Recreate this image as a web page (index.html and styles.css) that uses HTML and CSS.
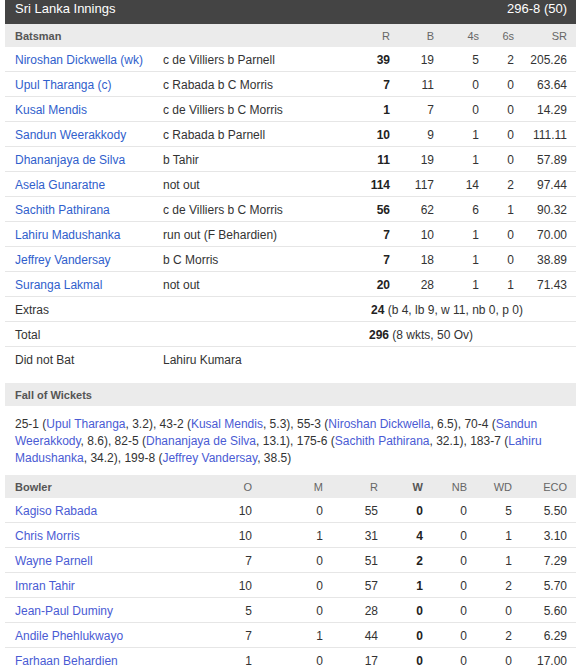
FILE: index.html
```html
<!DOCTYPE html>
<html>
<head>
<meta charset="utf-8">
<link rel="stylesheet" href="styles.css">
</head>
<body>
<div class="card">
  <div class="title-bar"><span>Sri Lanka Innings</span><span>296-8 (50)</span></div>

  <div class="bat-row head"><span class="lbl">Batsman</span><span></span><span class="n">R</span><span class="n">B</span><span class="n">4s</span><span class="n">6s</span><span class="n">SR</span></div>
  <div class="bat-row"><a class="pl">Niroshan Dickwella (wk)</a><span>c de Villiers b Parnell</span><b class="n">39</b><span class="n">19</span><span class="n">5</span><span class="n">2</span><span class="n">205.26</span></div>
  <div class="bat-row"><a class="pl">Upul Tharanga (c)</a><span>c Rabada b C Morris</span><b class="n">7</b><span class="n">11</span><span class="n">0</span><span class="n">0</span><span class="n">63.64</span></div>
  <div class="bat-row"><a class="pl">Kusal Mendis</a><span>c de Villiers b C Morris</span><b class="n">1</b><span class="n">7</span><span class="n">0</span><span class="n">0</span><span class="n">14.29</span></div>
  <div class="bat-row"><a class="pl">Sandun Weerakkody</a><span>c Rabada b Parnell</span><b class="n">10</b><span class="n">9</span><span class="n">1</span><span class="n">0</span><span class="n">111.11</span></div>
  <div class="bat-row"><a class="pl">Dhananjaya de Silva</a><span>b Tahir</span><b class="n">11</b><span class="n">19</span><span class="n">1</span><span class="n">0</span><span class="n">57.89</span></div>
  <div class="bat-row"><a class="pl">Asela Gunaratne</a><span>not out</span><b class="n">114</b><span class="n">117</span><span class="n">14</span><span class="n">2</span><span class="n">97.44</span></div>
  <div class="bat-row"><a class="pl">Sachith Pathirana</a><span>c de Villiers b C Morris</span><b class="n">56</b><span class="n">62</span><span class="n">6</span><span class="n">1</span><span class="n">90.32</span></div>
  <div class="bat-row"><a class="pl">Lahiru Madushanka</a><span>run out (F Behardien)</span><b class="n">7</b><span class="n">10</span><span class="n">1</span><span class="n">0</span><span class="n">70.00</span></div>
  <div class="bat-row"><a class="pl">Jeffrey Vandersay</a><span>b C Morris</span><b class="n">7</b><span class="n">18</span><span class="n">1</span><span class="n">0</span><span class="n">38.89</span></div>
  <div class="bat-row"><a class="pl">Suranga Lakmal</a><span>not out</span><b class="n">20</b><span class="n">28</span><span class="n">1</span><span class="n">1</span><span class="n">71.43</span></div>
  <div class="bat-row"><span>Extras</span><span></span><span class="summary"><b>24</b> (b 4, lb 9, w 11, nb 0, p 0)</span></div>
  <div class="bat-row"><span>Total</span><span></span><span class="summary total"><b>296</b> (8 wkts, 50 Ov)</span></div>
  <div class="bat-row dnb"><span>Did not Bat</span><span>Lahiru Kumara</span></div>

  <div class="section-head">Fall of Wickets</div>
  <p class="fow">25-1 (<a class="pl2">Upul Tharanga</a>, 3.2), 43-2 (<a class="pl2">Kusal Mendis</a>, 5.3), 55-3 (<a class="pl2">Niroshan Dickwella</a>, 6.5), 70-4 (<a class="pl2">Sandun Weerakkody</a>, 8.6), 82-5 (<a class="pl2">Dhananjaya de Silva</a>, 13.1), 175-6 (<a class="pl2">Sachith Pathirana</a>, 32.1), 183-7 (<a class="pl2">Lahiru Madushanka</a>, 34.2), 199-8 (<a class="pl2">Jeffrey Vandersay</a>, 38.5)</p>

  <div class="bowl-row head"><span class="lbl">Bowler</span><span class="n">O</span><span class="n">M</span><span class="n">R</span><span class="n lbl">W</span><span class="n">NB</span><span class="n">WD</span><span class="n">ECO</span></div>
  <div class="bowl-row"><a class="pl2">Kagiso Rabada</a><span class="n">10</span><span class="n">0</span><span class="n">55</span><b class="n">0</b><span class="n">0</span><span class="n">5</span><span class="n">5.50</span></div>
  <div class="bowl-row"><a class="pl2">Chris Morris</a><span class="n">10</span><span class="n">1</span><span class="n">31</span><b class="n">4</b><span class="n">0</span><span class="n">1</span><span class="n">3.10</span></div>
  <div class="bowl-row"><a class="pl2">Wayne Parnell</a><span class="n">7</span><span class="n">0</span><span class="n">51</span><b class="n">2</b><span class="n">0</span><span class="n">1</span><span class="n">7.29</span></div>
  <div class="bowl-row"><a class="pl2">Imran Tahir</a><span class="n">10</span><span class="n">0</span><span class="n">57</span><b class="n">1</b><span class="n">0</span><span class="n">2</span><span class="n">5.70</span></div>
  <div class="bowl-row"><a class="pl2">Jean-Paul Duminy</a><span class="n">5</span><span class="n">0</span><span class="n">28</span><b class="n">0</b><span class="n">0</span><span class="n">0</span><span class="n">5.60</span></div>
  <div class="bowl-row"><a class="pl2">Andile Phehlukwayo</a><span class="n">7</span><span class="n">1</span><span class="n">44</span><b class="n">0</b><span class="n">0</span><span class="n">2</span><span class="n">6.29</span></div>
  <div class="bowl-row"><a class="pl2">Farhaan Behardien</a><span class="n">1</span><span class="n">0</span><span class="n">17</span><b class="n">0</b><span class="n">0</span><span class="n">0</span><span class="n">17.00</span></div>
</div>
</body>
</html>
```

FILE: styles.css
```css
* { box-sizing: border-box; }
html, body { margin: 0; padding: 0; background: #fff; }
body {
  font-family: "Liberation Sans", Arial, sans-serif;
  font-size: 12px;
  color: #333;
}
.card {
  width: 571px;
  margin-left: 5px;
}
.title-bar {
  display: flex;
  justify-content: space-between;
  height: 24px;
  padding: 0 9px 0 10px;
  background: #444;
  color: #fff;
  font-size: 13px;
  line-height: 18px;
}
.bat-row, .bowl-row {
  display: grid;
  align-items: center;
  height: 25px;
  padding: 2px 9px 0 10px;
  border-bottom: 1px solid #e6e6e6;
  line-height: 14px;
  white-space: nowrap;
}
.bat-row { grid-template-columns: 148px 187px 40px 44px 45px 35px 53px; }
.bowl-row { grid-template-columns: 197px 40px 71px 55px 45px 44px 45px 55px; }
.head {
  height: 23px;
  padding-top: 1px;
  background: #ebebeb;
  border-bottom: none;
  font-size: 11px;
  color: #666;
}
.lbl { font-weight: bold; color: #555; }
.n { text-align: right; }
b { font-weight: bold; color: #222; }
.pl { color: #3060cc; text-decoration: none; }
.pl2 { color: #4a5bd4; text-decoration: none; }
.summary { grid-column: 3 / -1; padding-left: 21px; }
.summary.total { padding-left: 19px; }
.dnb {
  height: 24px;
  border-bottom: none;
  margin-bottom: 12px;
}
.section-head {
  height: 23px;
  padding: 2px 10px 0;
  background: #ebebeb;
  font-size: 11px;
  font-weight: bold;
  color: #555;
  line-height: 21px;
}
.fow {
  margin: 0;
  padding: 10px 9px 8px 10px;
  line-height: 17px;
}
```
